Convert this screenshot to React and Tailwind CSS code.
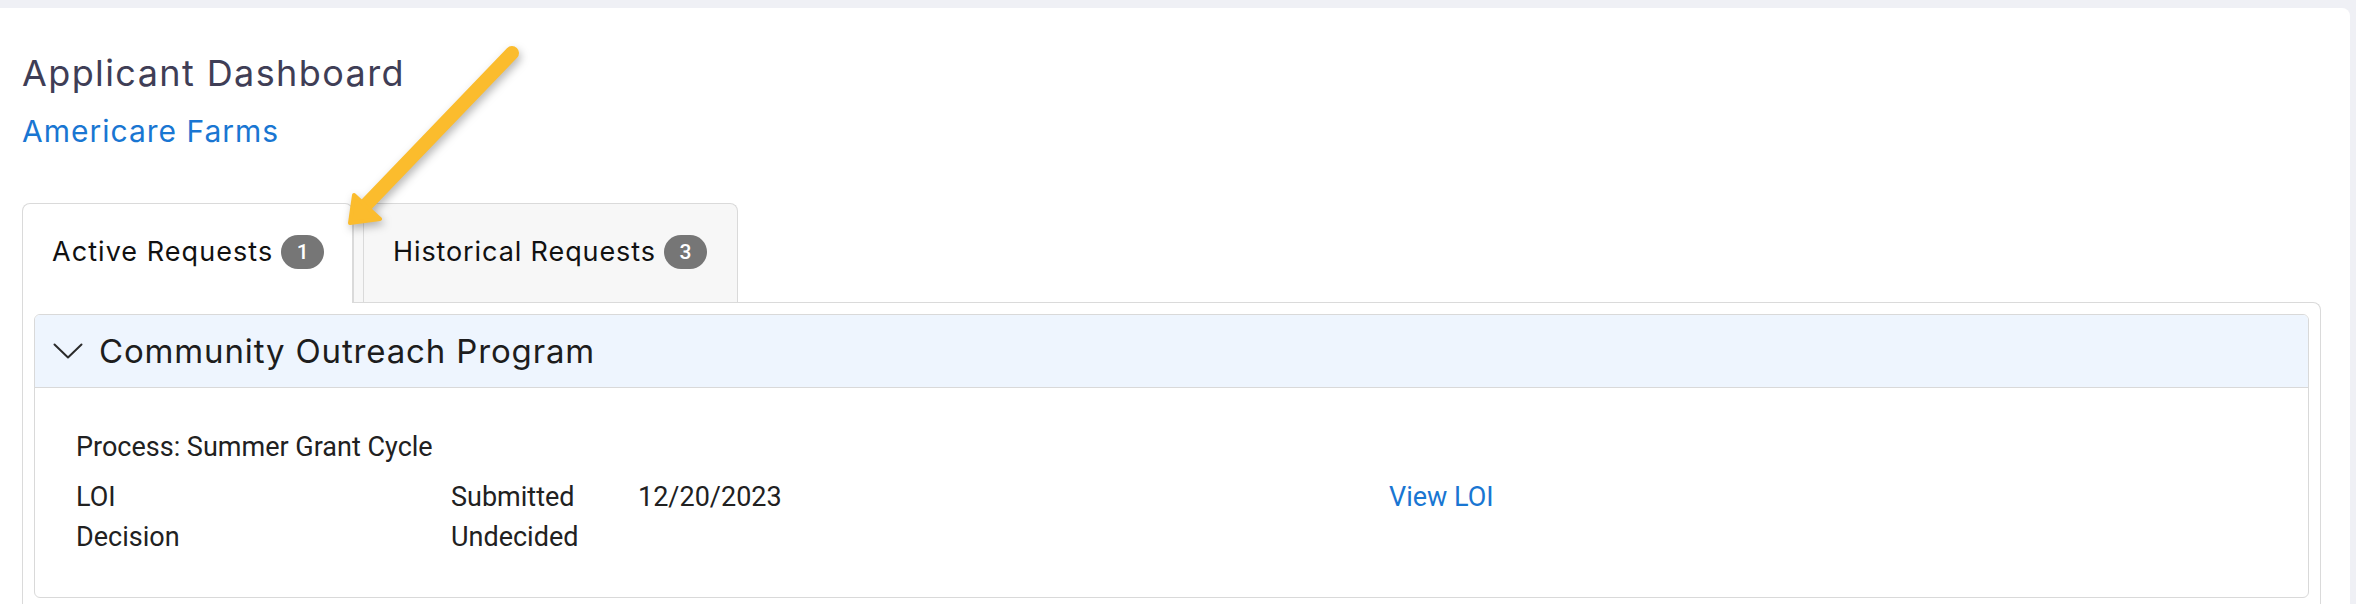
import React from 'react'

const poppins = { fontFamily: 'Inter, "Noto Sans", sans-serif' }

function Badge({ children }) {
  return (
    <span className="inline-flex h-[34px] w-[43px] items-center justify-center rounded-full bg-[#767676] font-['Roboto',sans-serif] text-[21px] font-medium leading-none tracking-normal text-white">
      {children}
    </span>
  )
}

function Chevron() {
  return (
    <svg width="30" height="16" viewBox="0 0 30 16" fill="none" className="shrink-0">
      <polyline points="1.5,1.5 15,14.5 28.5,1.5" stroke="#2b2b2b" strokeWidth="2" strokeLinecap="round" strokeLinejoin="round" />
    </svg>
  )
}

function Arrow() {
  return (
    <svg
      className="pointer-events-none absolute left-0 top-0 z-30 drop-shadow-[2px_4px_4px_rgba(0,0,0,0.28)]"
      width="600"
      height="260"
      viewBox="0 0 600 260"
    >
      <line x1="512" y1="53" x2="364" y2="207" stroke="#fbbc2d" strokeWidth="14" strokeLinecap="round" />
      <polygon points="350,223 354,195 380,219" fill="#fbbc2d" stroke="#fbbc2d" strokeWidth="4" strokeLinejoin="round" />
    </svg>
  )
}

export default function App() {
  return (
    <div className="relative h-[604px] w-[2356px] overflow-hidden bg-[#eff0f5] pt-2">
      <Arrow />
      <div className="h-full w-[2350px] rounded-tr-lg bg-white pl-[22px] pt-[43px]">
        {/* Header */}
        <h1 style={poppins} className="text-[36px] font-normal leading-[44px] tracking-[1.4px] text-[#3f3e56]">
          Applicant Dashboard
        </h1>
        <div style={poppins} className="mt-4 text-[30px] leading-[40px] tracking-[1px] text-[#1976d2]">
          Americare Farms
        </div>

        {/* Tabs */}
        <div style={poppins} className="mt-[52px] flex h-[99px] w-[2298px] items-start">
          <div className="relative z-10 -mb-px h-[100px] w-[331px] rounded-t-lg border border-b-0 border-[#dadada] bg-white pl-[29px] pt-[31px]">
            <div className="flex items-center gap-2 text-[27px] leading-[34px] tracking-[1.05px] text-[#111]">
              <span>Active Requests</span>
              <Badge>1</Badge>
            </div>
          </div>
          <div className="h-[99px] w-[385px] rounded-t-lg border border-b-0 border-[#dadada] bg-[#f7f7f7] pl-[9px] pt-[19px]">
            <div className="h-full border-l border-[#dadada] pl-[29px] pt-[12px]">
              <div className="flex items-center gap-2 text-[27px] leading-[34px] tracking-[0.9px] text-[#111]">
                <span>Historical Requests</span>
                <Badge>3</Badge>
              </div>
            </div>
          </div>
        </div>

        {/* Tab panel */}
        <div className="h-[320px] w-[2299px] rounded-tr-lg border border-b-0 border-[#dadada] pl-[11px] pr-[11px] pt-[11px]">
          <div className="overflow-hidden rounded-md border border-[#d9d9d9]">
            <div className="flex h-[73px] items-center gap-4 border-b border-[#d9d9d9] bg-[#eef5fe] pl-[18px]">
              <Chevron />
              <span style={poppins} className="text-[33px] leading-[40px] tracking-[0.85px] text-[#1d1d1d]">
                Community Outreach Program
              </span>
            </div>
            <div className="px-[41px] pb-[40px] pt-[39px] font-['Roboto',sans-serif] text-[27px] leading-[40px] text-[#212121]">
              <div className="mb-[10px]">Process: Summer Grant Cycle</div>
              <div className="grid grid-cols-[375px_187px_751px_1fr]">
                <div>LOI</div>
                <div>Submitted</div>
                <div>12/20/2023</div>
                <div className="text-[#1976d2]">View LOI</div>
                <div>Decision</div>
                <div>Undecided</div>
                <div />
                <div />
              </div>
            </div>
          </div>
        </div>
      </div>
    </div>
  )
}
